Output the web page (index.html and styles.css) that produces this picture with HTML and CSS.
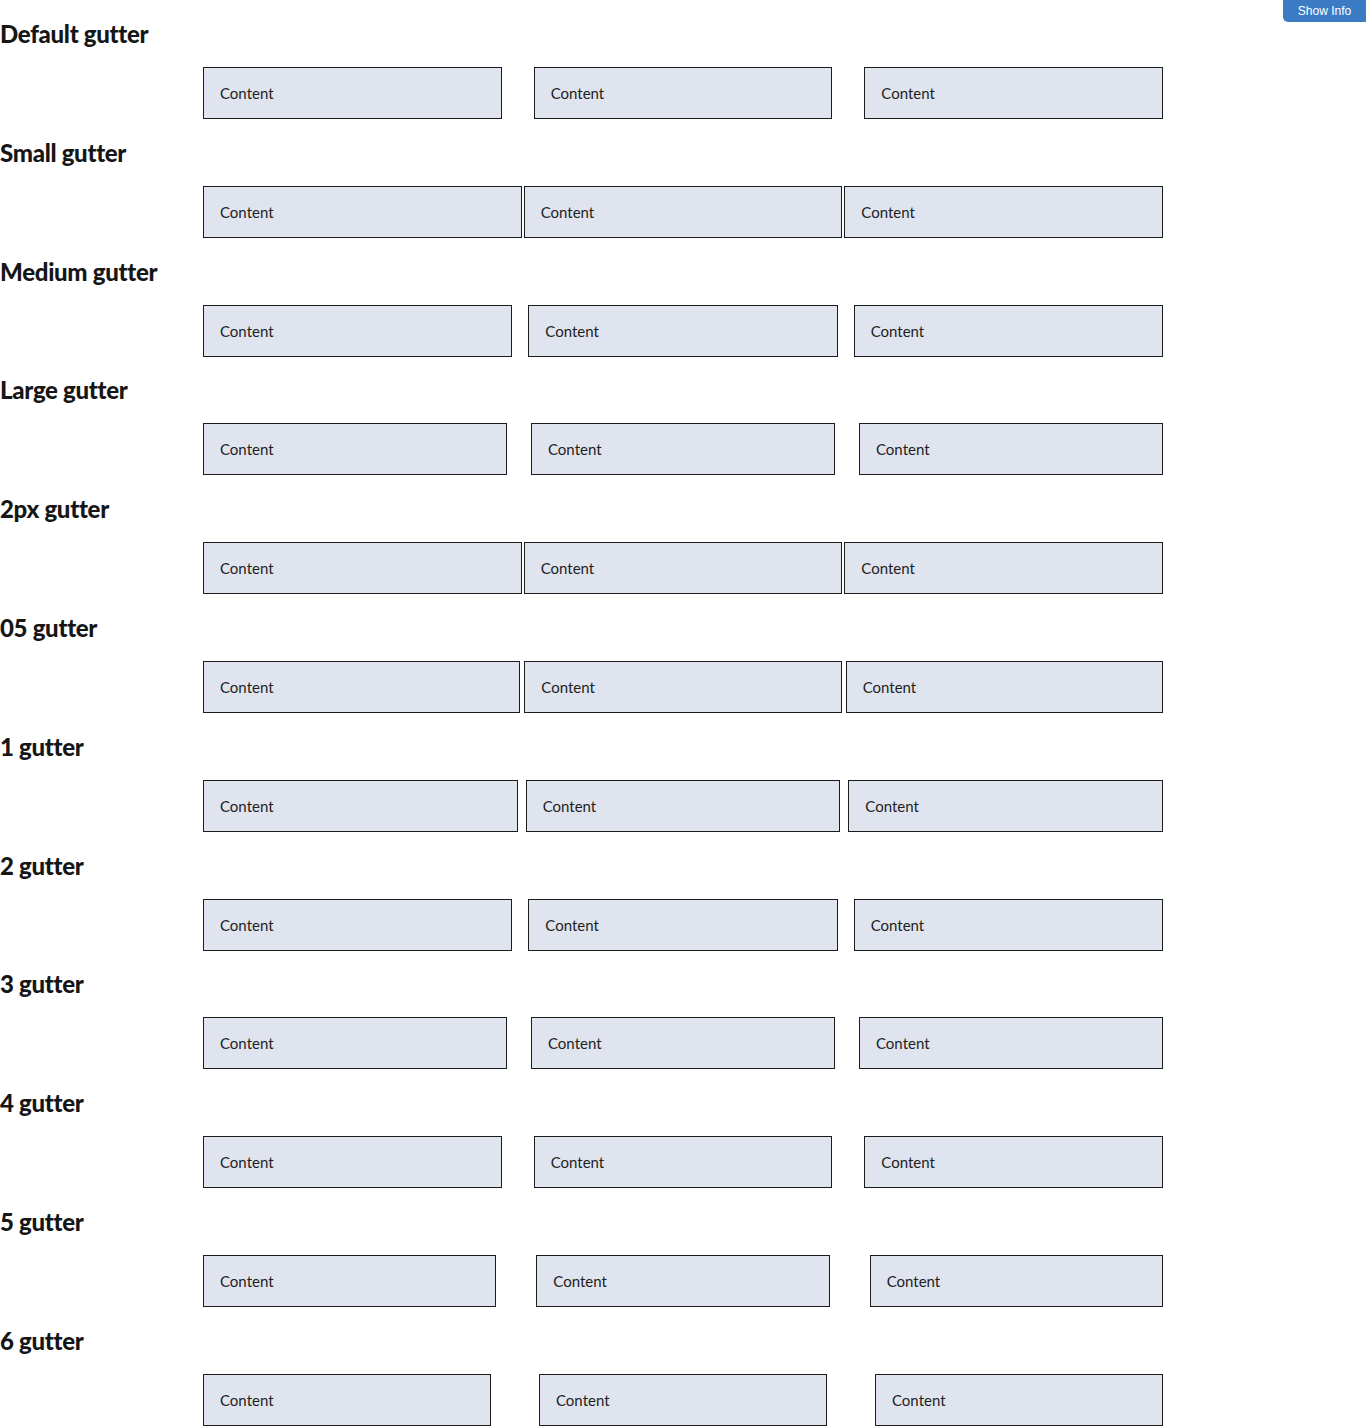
FILE: index.html
```html
<!DOCTYPE html>
<html lang="en">
<head>
<meta charset="utf-8">
<title>Grid gutters</title>
<link rel="stylesheet" href="styles.css">
</head>
<body>
<button class="show-info">Show Info</button>
<main class="page">
  <section class="demo">
    <h2 class="demo-title">Default gutter</h2>
    <div class="grid g-32"><div class="cell">Content</div><div class="cell">Content</div><div class="cell">Content</div></div>
  </section>
  <section class="demo">
    <h2 class="demo-title">Small gutter</h2>
    <div class="grid g-2"><div class="cell">Content</div><div class="cell">Content</div><div class="cell">Content</div></div>
  </section>
  <section class="demo">
    <h2 class="demo-title">Medium gutter</h2>
    <div class="grid g-16"><div class="cell">Content</div><div class="cell">Content</div><div class="cell">Content</div></div>
  </section>
  <section class="demo">
    <h2 class="demo-title">Large gutter</h2>
    <div class="grid g-24"><div class="cell">Content</div><div class="cell">Content</div><div class="cell">Content</div></div>
  </section>
  <section class="demo">
    <h2 class="demo-title">2px gutter</h2>
    <div class="grid g-2"><div class="cell">Content</div><div class="cell">Content</div><div class="cell">Content</div></div>
  </section>
  <section class="demo">
    <h2 class="demo-title">05 gutter</h2>
    <div class="grid g-4"><div class="cell">Content</div><div class="cell">Content</div><div class="cell">Content</div></div>
  </section>
  <section class="demo">
    <h2 class="demo-title">1 gutter</h2>
    <div class="grid g-8"><div class="cell">Content</div><div class="cell">Content</div><div class="cell">Content</div></div>
  </section>
  <section class="demo">
    <h2 class="demo-title">2 gutter</h2>
    <div class="grid g-16"><div class="cell">Content</div><div class="cell">Content</div><div class="cell">Content</div></div>
  </section>
  <section class="demo">
    <h2 class="demo-title">3 gutter</h2>
    <div class="grid g-24"><div class="cell">Content</div><div class="cell">Content</div><div class="cell">Content</div></div>
  </section>
  <section class="demo">
    <h2 class="demo-title">4 gutter</h2>
    <div class="grid g-32"><div class="cell">Content</div><div class="cell">Content</div><div class="cell">Content</div></div>
  </section>
  <section class="demo">
    <h2 class="demo-title">5 gutter</h2>
    <div class="grid g-40"><div class="cell">Content</div><div class="cell">Content</div><div class="cell">Content</div></div>
  </section>
  <section class="demo">
    <h2 class="demo-title">6 gutter</h2>
    <div class="grid g-48"><div class="cell">Content</div><div class="cell">Content</div><div class="cell">Content</div></div>
  </section>
</main>
</body>
</html>
```
FILE: styles.css
```css
* { box-sizing: border-box; }
html, body { margin: 0; padding: 0; background: #fff; }
body {
  font-family: Lato, "Noto Sans", sans-serif;
  color: #161616;
}
.page {
  display: flex;
  flex-direction: column;
  padding-top: 19px;
}
.demo {
  display: flex;
  flex-direction: column;
  gap: 18px;
  height: 118.8px;
}
.demo-title {
  margin: 0;
  font-size: 24px;
  line-height: 30px;
  font-weight: 900;
  color: #161616;
  letter-spacing: -0.3px;
}
.grid {
  display: grid;
  grid-template-columns: repeat(3, 1fr);
  width: 960px;
  margin-left: 203px;
}
.g-2 { column-gap: 2px; }
.g-4 { column-gap: 4px; }
.g-8 { column-gap: 8px; }
.g-16 { column-gap: 16px; }
.g-24 { column-gap: 24px; }
.g-32 { column-gap: 32px; }
.g-40 { column-gap: 40px; }
.g-48 { column-gap: 48px; }
.cell {
  height: 52px;
  display: flex;
  align-items: center;
  padding: 0 16px;
  background: #e0e4ee;
  border: 1px solid #1c1c1c;
  font-size: 15px;
  color: #1e1e1e;
}
.show-info {
  position: absolute;
  top: 0;
  right: 0;
  width: 83px;
  height: 22px;
  border: 0;
  border-radius: 0 0 0 5px;
  background: #3a7bc4;
  color: #fff;
  font-family: "Liberation Sans", Arial, sans-serif;
  font-size: 12px;
  padding: 0;
  cursor: pointer;
}
```
